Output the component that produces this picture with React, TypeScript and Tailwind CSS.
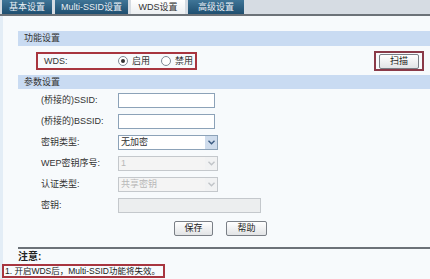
import React from "react";

const font = { fontFamily: '"Liberation Sans","Noto Sans CJK SC","DejaVu Sans",sans-serif' };

function Tab({ label, active, w }: { label: string; active?: boolean; w: string }) {
  return (
    <div
      className={
        "h-[14px] flex items-center justify-center text-[9px] leading-none whitespace-nowrap " +
        w +
        " " +
        (active
          ? "bg-gradient-to-b from-[#ffffff] to-[#eceff2] text-[#333]"
          : "bg-gradient-to-b from-[#3f7597] to-[#1f4f70] text-[#e8eef4]")
      }
    >
      {label}
    </div>
  );
}

function Row({ label, children }: { label: string; children: React.ReactNode }) {
  return (
    <div className="flex items-center h-[15px]">
      <div className="w-[100px] pl-[23px] text-[9px] leading-none text-[#333] whitespace-nowrap">{label}</div>
      {children}
    </div>
  );
}

function Select({ value, disabled, w }: { value: string; disabled?: boolean; w: string }) {
  return (
    <div
      className={
        "h-[15px] flex items-center border " +
        w +
        " " +
        (disabled ? "border-[#c4c8cc] bg-[#f4f4f4] text-[#b8b8b8]" : "border-[#8ca2b8] bg-white text-[#333]")
      }
    >
      <span className="flex-1 pl-[2px] text-[9px] leading-none">{value}</span>
      <div
        className={
          "w-[12px] h-[13px] flex items-center justify-center " + (disabled ? "bg-[#f1f2f3]" : "bg-[#cfdcec]")
        }
      >
        <svg width="7" height="5" viewBox="0 0 7 5">
          <path d="M0.5 0.8 L3.5 3.8 L6.5 0.8" fill="none" stroke={disabled ? "#c0c4c8" : "#3a5a80"} strokeWidth="1.4" />
        </svg>
      </div>
    </div>
  );
}

function Radio({ on }: { on?: boolean }) {
  return (
    <div className="shrink-0 w-[10px] h-[10px] rounded-full border border-[#7f8a96] bg-white flex items-center justify-center">
      {on && <div className="w-[4px] h-[4px] rounded-full bg-[#333]" />}
    </div>
  );
}

function Btn({ label, w }: { label: string; w: string }) {
  return (
    <div
      className={
        "h-[15px] flex items-center justify-center border border-[#7a7f86] rounded-[2px] bg-gradient-to-b from-[#ffffff] to-[#e2e4e6] text-[9px] leading-none text-[#222] " +
        w
      }
    >
      {label}
    </div>
  );
}

export default function App() {
  return (
    <div className="w-[430px] h-[279px] overflow-hidden bg-[#f7fafc] flex flex-col" style={font}>
      <div className="h-[16px] flex items-start gap-[3px] pl-[2px] bg-[#d6dce3] border-b-2 border-[#6c7278]">
        <Tab label="基本设置" w="w-[50px]" />
        <Tab label="Multi-SSID设置" w="w-[73px]" />
        <Tab label="WDS设置" w="w-[54px]" active />
        <Tab label="高级设置" w="w-[56px]" />
      </div>
      <div className="flex-1 flex flex-col border-l-[3px] border-[#e3edf6]">
        <div className="pl-[15px] pt-[15px] flex flex-col">
          <div className="h-[15px] bg-[#c9dbf2] flex items-center pl-[6px] text-[9px] leading-none text-[#333]">功能设置</div>
          <div className="mt-[5px] flex items-center justify-between pr-[6px]">
            <div className="ml-[18px] w-[161px] h-[18px] border-2 border-[#a8353f] flex items-center pl-[6px] whitespace-nowrap">
              <span className="shrink-0 text-[9px] leading-none text-[#333] w-[74px]">WDS:</span>
              <Radio on />
              <span className="shrink-0 ml-[4px] text-[9px] leading-none text-[#333]">启用</span>
              <span className="shrink-0 ml-[11px]">
                <Radio />
              </span>
              <span className="shrink-0 ml-[4px] text-[9px] leading-none text-[#333]">禁用</span>
            </div>
            <div className="w-[50px] h-[20px] border-2 border-[#8a3a48] flex items-center justify-center">
              <Btn label="扫描" w="w-[40px]" />
            </div>
          </div>
          <div className="mt-[4px] h-[14px] bg-[#c9dbf2] flex items-center pl-[6px] text-[9px] leading-none text-[#333]">参数设置</div>
          <div className="mt-[4px] flex flex-col gap-[6px]">
            <Row label="(桥接的)SSID:">
              <div className="w-[97px] h-[15px] border border-[#8ca2b8] bg-white" />
            </Row>
            <Row label="(桥接的)BSSID:">
              <div className="w-[97px] h-[15px] border border-[#8ca2b8] bg-white" />
            </Row>
            <Row label="密钥类型:">
              <Select value="无加密" w="w-[100px]" />
            </Row>
            <Row label="WEP密钥序号:">
              <Select value="1" disabled w="w-[100px]" />
            </Row>
            <Row label="认证类型:">
              <Select value="共享密钥" disabled w="w-[100px]" />
            </Row>
            <Row label="密钥:">
              <div className="w-[143px] h-[15px] border border-[#c4c8cc] bg-[#eceeef]" />
            </Row>
          </div>
          <div className="mt-[8px] flex gap-[13px] pl-[156px]">
            <Btn label="保存" w="w-[39px]" />
            <Btn label="帮助" w="w-[41px]" />
          </div>
          <div className="mt-[11px] h-[2px] bg-[#6c7278]" />
          <div className="mt-[3px] text-[10px] leading-none font-bold text-[#222]">注意:</div>
        </div>
        <div className="mt-[2px] -ml-[1px] w-[163px] h-[14px] border-2 border-[#a8353f] flex items-center pl-[1px] text-[8.5px] leading-none text-[#222] whitespace-nowrap">
          1. 开启WDS后，Multi-SSID功能将失效。
        </div>
      </div>
    </div>
  );
}
